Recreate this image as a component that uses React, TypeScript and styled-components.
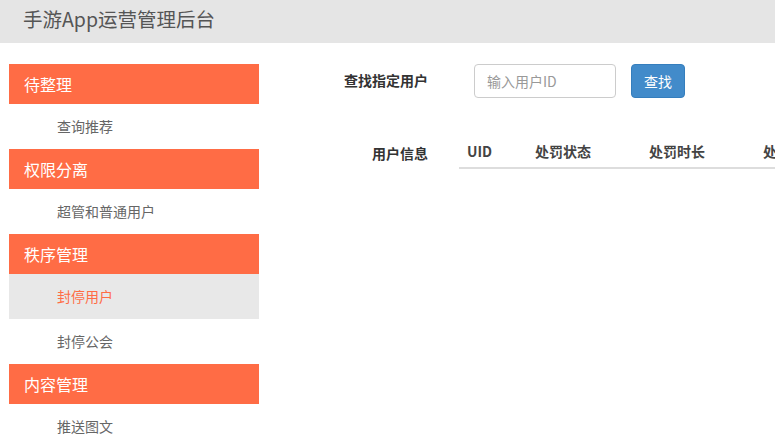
import React from "react";
import styled, { createGlobalStyle } from "styled-components";

const menu = [
  { title: "待整理", items: ["查询推荐"] },
  { title: "权限分离", items: ["超管和普通用户"] },
  { title: "秩序管理", items: ["封停用户", "封停公会"] },
  { title: "内容管理", items: ["推送图文"] },
];

const columns = ["UID", "处罚状态", "处罚时长", "处罚原因", "操作"];
const colWidths = [68, 114, 114, 114, 114];

export default function App() {
  return (
    <>
      <GlobalStyle />
      <Header>
        <Brand>手游App运营管理后台</Brand>
      </Header>
      <Body>
        <Sidebar>
          {menu.map((group) => (
            <div key={group.title}>
              <GroupTitle>{group.title}</GroupTitle>
              {group.items.map((item) => (
                <MenuItem key={item} $active={item === "封停用户"}>
                  {item}
                </MenuItem>
              ))}
            </div>
          ))}
        </Sidebar>
        <Main>
          <FormRow>
            <Label>查找指定用户</Label>
            <Input placeholder="输入用户ID" />
            <Button>查找</Button>
          </FormRow>
          <TableRow>
            <Label $top={13}>用户信息</Label>
            <Table>
              <colgroup>
                {colWidths.map((w, i) => (
                  <col key={i} style={{ width: w }} />
                ))}
              </colgroup>
              <thead>
                <tr>
                  {columns.map((c) => (
                    <Th key={c}>{c}</Th>
                  ))}
                </tr>
              </thead>
            </Table>
          </TableRow>
        </Main>
      </Body>
    </>
  );
}

const GlobalStyle = createGlobalStyle`
  body {
    margin: 0;
    overflow: hidden;
    background: #fff;
    font-family: "Noto Sans CJK SC", "Noto Sans", sans-serif;
    color: #333;
  }
`;

const Header = styled.header`
  height: 43px;
  background: #e5e5e5;
  display: flex;
  align-items: center;
  padding-left: 23px;
`;

const Brand = styled.span`
  font-size: 19.5px;
  color: #555;
  line-height: 1;
  margin-top: -5px;
`;

const Body = styled.div`
  display: flex;
  padding-top: 21px;
`;

const Sidebar = styled.nav`
  width: 250px;
  margin-left: 9px;
  flex-shrink: 0;
`;

const GroupTitle = styled.div`
  height: 40px;
  background: #ff6c45;
  color: #fff;
  font-size: 16px;
  line-height: 40px;
  padding-left: 15px;
`;

const MenuItem = styled.div<{ $active?: boolean }>`
  height: 45px;
  line-height: 45px;
  padding-left: 48px;
  font-size: 14px;
  color: ${(p) => (p.$active ? "#ff6c45" : "#666")};
  background: ${(p) => (p.$active ? "#e8e8e8" : "transparent")};
`;

const Main = styled.main`
  flex: 1;
  display: flex;
  flex-direction: column;
  min-width: 0;
`;

const FormRow = styled.div`
  display: flex;
  align-items: center;
  height: 34px;
`;

const Label = styled.label<{ $top?: number }>`
  width: 169px;
  text-align: right;
  font-size: 14px;
  font-weight: bold;
  color: #333;
  flex-shrink: 0;
  padding-top: ${(p) => p.$top ?? 0}px;
  margin-top: -3px;
`;

const Input = styled.input`
  box-sizing: border-box;
  margin-left: 46px;
  width: 142px;
  height: 34px;
  border: 1px solid #ccc;
  border-radius: 4px;
  padding: 0 12px;
  font-size: 14px;
  font-family: inherit;
  &::placeholder {
    color: #999;
  }
`;

const Button = styled.button`
  margin-left: 15px;
  width: 54px;
  height: 34px;
  border: 1px solid #357ebd;
  border-radius: 4px;
  background: #428bca;
  color: #fff;
  font-size: 14px;
  font-family: inherit;
`;

const TableRow = styled.div`
  display: flex;
  align-items: flex-start;
  margin-top: 35px;
`;

const Table = styled.table`
  margin-left: 31px;
  width: 524px;
  flex-shrink: 0;
  border-collapse: collapse;
  table-layout: fixed;
  white-space: nowrap;
`;

const Th = styled.th`
  text-align: left;
  padding: 8px 8px 6px;
  font-size: 14px;
  font-weight: bold;
  color: #444;
  line-height: 20px;
  border-bottom: 2px solid #ddd;
  vertical-align: bottom;
  overflow: hidden;
`;
